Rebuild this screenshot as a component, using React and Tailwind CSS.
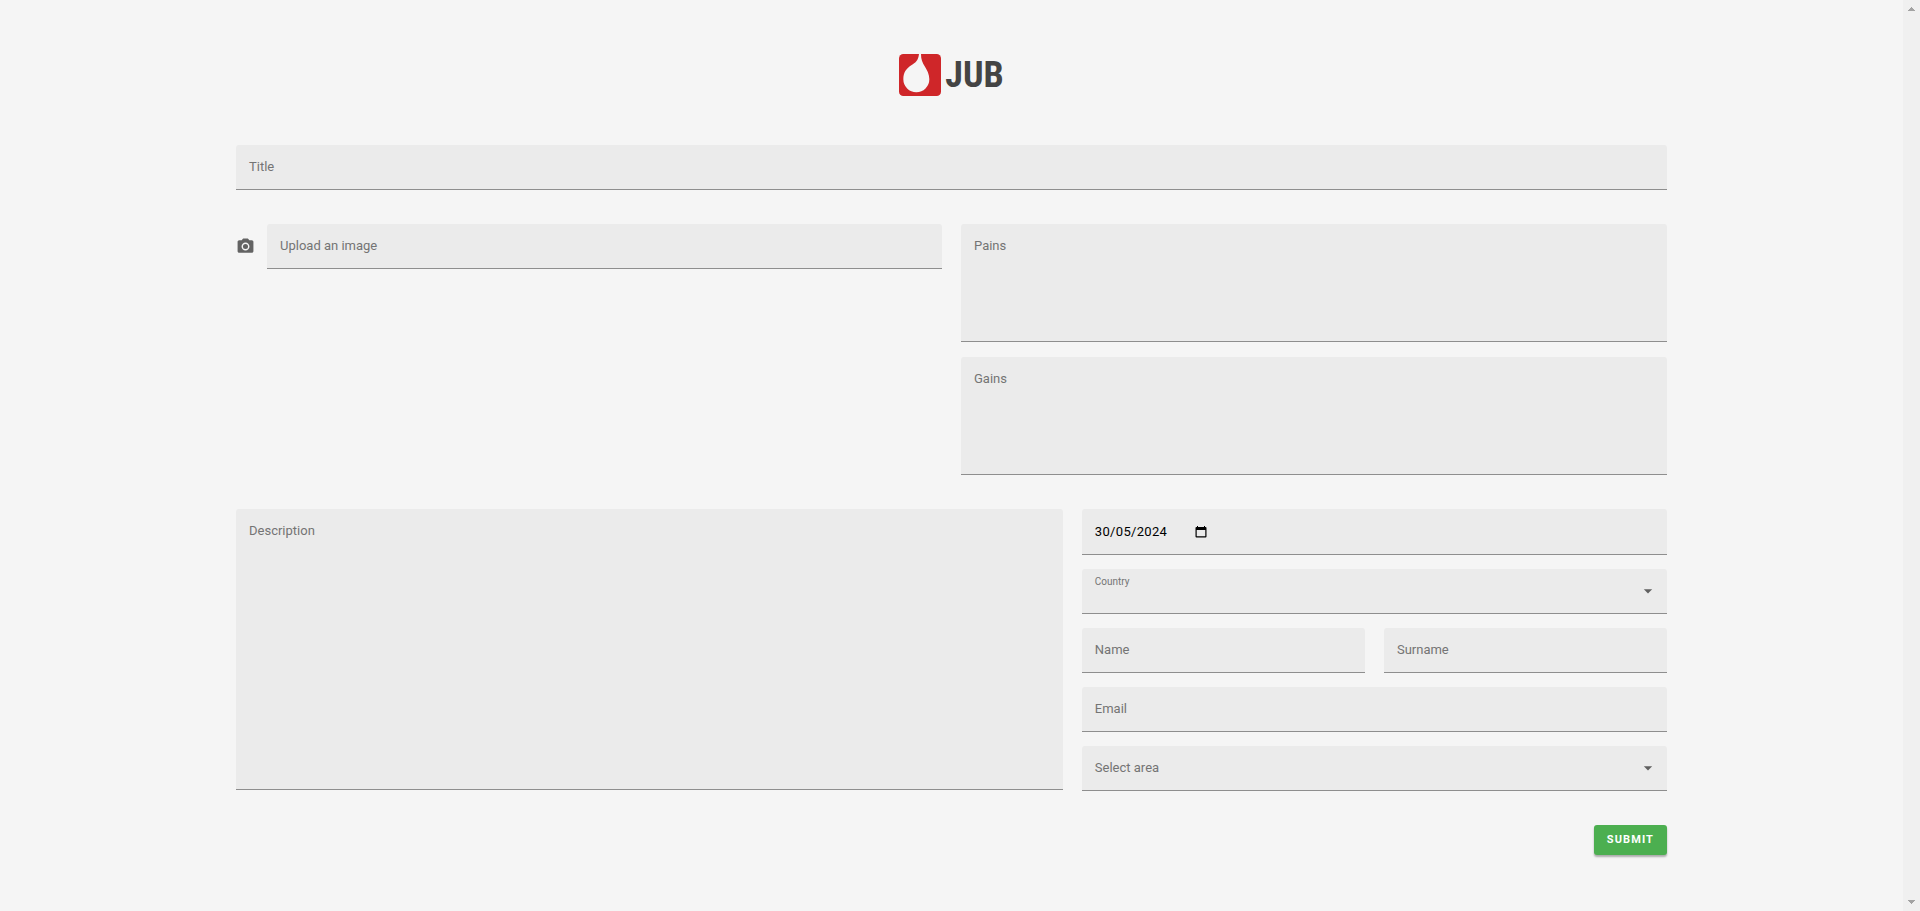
import React from "react";

const box =
  "grid rounded-t-[3px] border-b border-[#8e8e8e] bg-[#ebebeb] text-[13px] text-[#747474]";
const control =
  "peer col-start-1 row-start-1 w-full min-w-0 bg-transparent px-[13px] text-black/85 outline-none";
const caption =
  "pointer-events-none col-start-1 row-start-1 self-start px-[13px] leading-[44px] peer-[:not(:placeholder-shown)]:invisible";

function TextField({ id, label, type = "text", className = "" }) {
  return (
    <div className={`${box} h-[45px] ${className}`}>
      <input id={id} type={type} placeholder=" " className={control} />
      <label htmlFor={id} className={caption}>{label}</label>
    </div>
  );
}

function AreaField({ id, label, className = "" }) {
  return (
    <div className={`${box} ${className}`}>
      <textarea id={id} placeholder=" " className={`${control} resize-none py-3`} />
      <label htmlFor={id} className={caption}>{label}</label>
    </div>
  );
}

function SelectField({ id, label, raised = false }) {
  return (
    <div className={`${box} h-[45px]`}>
      <select id={id} defaultValue="" className={`${control} appearance-none`}>
        <option value="" />
      </select>
      <label
        htmlFor={id}
        className={
          raised
            ? "pointer-events-none col-start-1 row-start-1 self-start px-[13px] text-[10px] leading-[26px]"
            : "pointer-events-none col-start-1 row-start-1 self-start px-[13px] leading-[44px]"
        }
      >
        {label}
      </label>
      <svg
        viewBox="0 0 24 24"
        className="pointer-events-none col-start-1 row-start-1 mr-[9px] size-5 self-center justify-self-end fill-[#606060]"
        aria-hidden="true"
      >
        <path d="M7 10l5 5 5-5z" />
      </svg>
    </div>
  );
}

function DateField() {
  return (
    <div className="flex h-[46px] items-center rounded-t-[3px] border-b border-[#8e8e8e] bg-[#ebebeb] px-[13px] text-[13px] text-black">
      <input
        id="date"
        type="text"
        aria-label="Date"
        defaultValue="30/05/2024"
        className="w-[100px] bg-transparent tracking-wide outline-none"
      />
      <button type="button" aria-label="Open calendar">
        <svg viewBox="0 0 12 12" className="size-3" aria-hidden="true">
          <path
            fillRule="evenodd"
            d="M2 0h1v1h6V0h1v1h.5A1 1 0 0 1 11.500 2v8.500a1 1 0 0 1-1 1h-9a1 1 0 0 1-1-1V2a1 1 0 0 1 1-1H2zM1.700 4v6.300h8.600V4z"
          />
        </svg>
      </button>
    </div>
  );
}

function Logo() {
  return (
    <div className="flex h-[42px] items-center justify-center gap-1">
      <svg viewBox="0 0 126 126" className="size-[42px]" aria-hidden="true">
        <rect width="126" height="126" rx="13" fill="#cf2629" />
        <path
          fill="#f5f5f5"
          d="M60 0C58 20 48 27 38 33C22 43 13 55 13 76A39 39 0 0 0 91 76C91 60 84 48 78 38C70 26 66 16 66 0Z"
        />
      </svg>
      <span className="font-['Roboto_Condensed','Open_Sans_Condensed','Liberation_Sans_Narrow',sans-serif] text-[36px] leading-[42px] font-bold text-[#444444]">
        JUB
      </span>
    </div>
  );
}

function ScrollRail() {
  return (
    <div className="flex w-[17px] shrink-0 flex-col items-center justify-between bg-[#f0f0f0] py-[7px]" aria-hidden="true">
      <svg viewBox="0 0 7 4" className="h-1 w-[7px] fill-[#a3a3a3]">
        <path d="M3 0h1v1h1v1h1v1h1v1H0V3h1V2h1V1h1z" />
      </svg>
      <svg viewBox="0 0 7 4" className="h-1 w-[7px] fill-[#a3a3a3]">
        <path d="M3 4h1V3h1V2h1V1h1V0H0v1h1v1h1v1h1z" />
      </svg>
    </div>
  );
}

export default function App() {
  return (
    <div className="flex min-h-screen bg-[#f5f5f5] font-[Roboto,sans-serif]">
      <main className="min-w-0 flex-1 px-4 pt-[54px] pb-12">
        <form className="mx-auto max-w-[1431px]" onSubmit={(e) => e.preventDefault()}>
          <Logo />
          <TextField id="title" label="Title" className="mt-[49px]" />

          <div className="mt-[34px] grid grid-cols-2 gap-[19px]">
            <div className="flex items-start gap-3">
              <svg viewBox="0 0 24 24" className="mt-[13px] size-[19px] shrink-0 fill-[#636363]" aria-hidden="true">
                <path
                  fillRule="evenodd"
                  d="M9 2L7.170 4H4c-1.100 0-2 .9-2 2v12c0 1.100.9 2 2 2h16c1.100 0 2-.9 2-2V6c0-1.100-.9-2-2-2h-3.170L15 2H9zm3 15c-2.760 0-5-2.240-5-5s2.240-5 5-5 5 2.240 5 5-2.240 5-5 5zM12 8.800a3.200 3.200 0 1 0 0 6.400 3.200 3.200 0 0 0 0-6.400z"
                />
              </svg>
              <TextField id="image" label="Upload an image" className="flex-1" />
            </div>
            <div className="flex flex-col gap-[15px]">
              <AreaField id="pains" label="Pains" className="h-[118px]" />
              <AreaField id="gains" label="Gains" className="h-[118px]" />
            </div>
          </div>

          <div className="mt-[34px] grid grid-cols-12 gap-[19px]">
            <AreaField id="description" label="Description" className="col-span-7 h-[281px]" />
            <div className="col-span-5 flex flex-col gap-[14px]">
              <DateField />
              <SelectField id="country" label="Country" raised />
              <div className="grid grid-cols-2 gap-[19px]">
                <TextField id="name" label="Name" />
                <TextField id="surname" label="Surname" />
              </div>
              <TextField id="email" label="Email" type="email" />
              <SelectField id="area" label="Select area" />
            </div>
          </div>

          <div className="mt-[34px] flex justify-end">
            <button
              type="submit"
              className="h-[30px] rounded-[3px] bg-[#4caf50] px-[13px] text-[11px] font-bold tracking-widest text-white uppercase shadow-[0_2px_2px_rgba(0,0,0,0.3)]"
            >
              Submit
            </button>
          </div>
        </form>
      </main>
      <ScrollRail />
    </div>
  );
}
